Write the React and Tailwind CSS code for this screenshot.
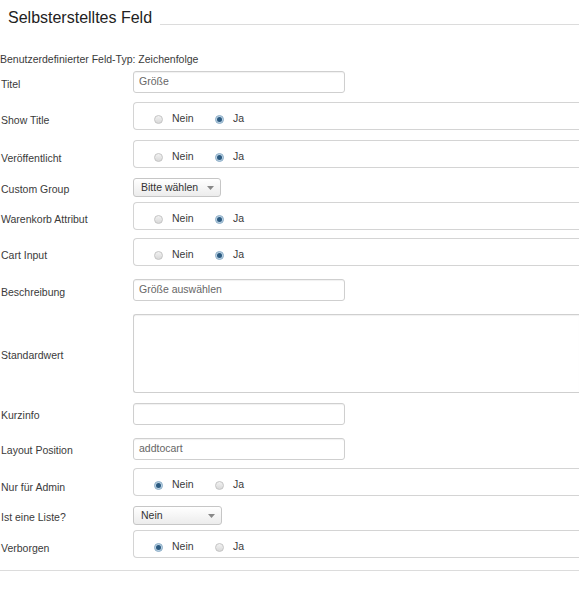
import React from "react";

function Radio({ checked }) {
  if (checked) {
    return (
      <span className="inline-flex h-[9px] w-[9px] items-center justify-center rounded-full border border-[#8fb0c9] bg-[#bcd2e3]">
        <span className="h-[5px] w-[5px] rounded-full bg-[#2b5a80]" />
      </span>
    );
  }
  return (
    <span className="inline-block h-[9px] w-[9px] rounded-full border border-[#c4c4c4] bg-gradient-to-b from-[#f2f2f2] to-[#d9d9d9]" />
  );
}

function YesNo({ yes }) {
  return (
    <div className="h-[28px] flex-1 rounded-l-[4px] border border-r-0 border-[#d4d4d4] pl-[20px] pt-[9px]">
      <div className="flex h-[14px] items-center">
        <Radio checked={!yes} />
        <span className="ml-[9px] w-[43px]">Nein</span>
        <Radio checked={yes} />
        <span className="ml-[9px]">Ja</span>
      </div>
    </div>
  );
}

function TextInput({ value }) {
  return (
    <div className="flex h-[22px] w-[212px] items-center rounded-[3px] border border-[#cfcfcf] pl-[5px] text-[#666] shadow-[inset_0_1px_1px_rgba(0,0,0,0.06)]">
      {value}
    </div>
  );
}

function Select({ value, width }) {
  return (
    <div
      className={`flex h-[19px] items-center justify-between rounded-[3px] border border-[#c6c6c6] bg-gradient-to-b from-white to-[#ececec] pl-[7px] pr-[6px] text-[#333] ${width}`}
    >
      <span>{value}</span>
      <svg width="7" height="4" viewBox="0 0 7 4">
        <path d="M0 0h7L3.5 4z" fill="#888" />
      </svg>
    </div>
  );
}

function Row({ label, mt, pt, children }) {
  return (
    <div className={`flex items-start ${mt}`}>
      <div className={`w-[133px] shrink-0 pl-[1px] leading-[14px] ${pt}`}>{label}</div>
      {children}
    </div>
  );
}

export default function App() {
  return (
    <div className="h-[600px] w-[579px] overflow-hidden bg-white font-['Liberation_Sans',Arial,sans-serif] text-[10.5px] text-[#3a3a3a]">
      <div className="flex h-[28px] pt-[8px]">
        <h1 className="ml-[8px] text-[16px] leading-[20px] text-[#222]">Selbsterstelltes Feld</h1>
        <div className="mb-[3px] ml-[8px] flex-1 self-end border-b border-[#dcdcdc]" />
      </div>

      <div className="mt-[24px] leading-[14px]">Benutzerdefinierter Feld-Typ: Zeichenfolge</div>

      <Row label="Titel" mt="mt-[5px]" pt="pt-[6px]">
        <TextInput value="Größe" />
      </Row>
      <Row label="Show Title" mt="mt-[9px]" pt="pt-[11px]">
        <YesNo yes />
      </Row>
      <Row label="Veröffentlicht" mt="mt-[10px]" pt="pt-[11px]">
        <YesNo yes />
      </Row>
      <Row label="Custom Group" mt="mt-[10px]" pt="pt-[4px]">
        <Select value="Bitte wählen" width="w-[88px]" />
      </Row>
      <Row label="Warenkorb Attribut" mt="mt-[5px]" pt="pt-[10px]">
        <YesNo yes />
      </Row>
      <Row label="Cart Input" mt="mt-[8px]" pt="pt-[10px]">
        <YesNo yes />
      </Row>
      <Row label="Beschreibung" mt="mt-[13px]" pt="pt-[6px]">
        <TextInput value="Größe auswählen" />
      </Row>
      <Row label="Standardwert" mt="mt-[13px]" pt="pt-[34px]">
        <div className="h-[79px] flex-1 rounded-l-[3px] border border-r-0 border-[#cfcfcf] shadow-[inset_0_1px_1px_rgba(0,0,0,0.06)]" />
      </Row>
      <Row label="Kurzinfo" mt="mt-[10px]" pt="pt-[5px]">
        <TextInput value="" />
      </Row>
      <Row label="Layout Position" mt="mt-[13px]" pt="pt-[5px]">
        <TextInput value="addtocart" />
      </Row>
      <Row label="Nur für Admin" mt="mt-[8px]" pt="pt-[12px]">
        <YesNo yes={false} />
      </Row>
      <Row label="Ist eine Liste?" mt="mt-[10px]" pt="pt-[4px]">
        <Select value="Nein" width="w-[89px]" />
      </Row>
      <Row label="Verborgen" mt="mt-[5px]" pt="pt-[11px]">
        <YesNo yes={false} />
      </Row>

      <div className="mt-[12px] border-b border-[#dcdcdc]" />
    </div>
  );
}
